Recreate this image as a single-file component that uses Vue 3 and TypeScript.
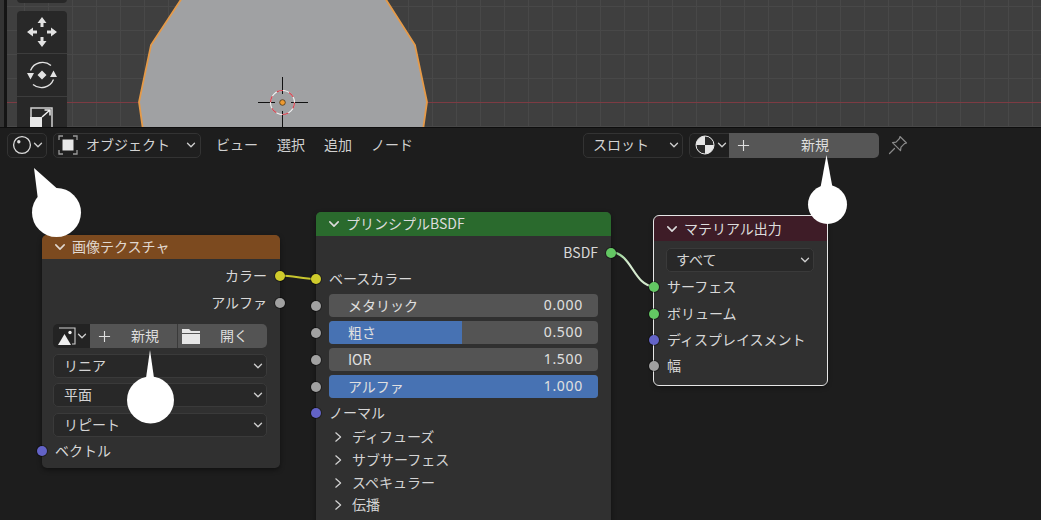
<template>
  <div class="app">
    <svg class="defs" width="0" height="0">
      <symbol id="chev-down" viewBox="0 0 10 10">
        <path d="M1.5 3.2 5 6.8 8.5 3.2" fill="none" stroke="currentColor" stroke-width="1.3" stroke-linecap="round" stroke-linejoin="round" />
      </symbol>
      <symbol id="chev-right" viewBox="0 0 10 10">
        <path d="M2.8 0.8 7.6 5 2.8 9.2" fill="none" stroke="currentColor" stroke-width="1.2" stroke-linecap="round" stroke-linejoin="round" />
      </symbol>
      <symbol id="plus" viewBox="0 0 14 14">
        <path d="M7 1v12M1 7h12" fill="none" stroke="currentColor" stroke-width="1.2" />
      </symbol>
    </svg>

    <section class="viewport">
      <div class="area-edge"></div>
      <svg class="scene" width="1041" height="128" viewBox="0 0 1041 128">
        <line x1="7" y1="102.500" x2="1041" y2="102.500" stroke="#7d3b43" stroke-width="1" />
        <polygon points="182,-2 151,45 139,102 143,130 423,130 427,102 415,45 385,-2" fill="#a0a1a3" stroke="#e59a48" stroke-width="1.800" />
        <g stroke="#111" stroke-width="1" fill="none">
          <line x1="258" y1="102.500" x2="275" y2="102.500" />
          <line x1="291" y1="102.500" x2="308" y2="102.500" />
          <line x1="282.500" y1="77" x2="282.500" y2="94" />
          <line x1="282.500" y1="111" x2="282.500" y2="128" />
        </g>
        <circle cx="282.500" cy="102.500" r="12" fill="none" stroke="#f4f4f4" stroke-width="1.100" />
        <circle cx="282.500" cy="102.500" r="12" fill="none" stroke="#d2434f" stroke-width="1.200" stroke-dasharray="6.300 6.300" />
        <circle cx="282.500" cy="102.500" r="2.800" fill="#ee9a30" stroke="#4a3518" stroke-width="0.800" />
      </svg>
      <div class="tool-stub"></div>
      <div class="tools">
        <div class="tool">
          <svg width="32" height="32" viewBox="0 0 32 32" fill="#e2e2e2">
            <path d="M16 1l4.500 6h-9zM16 31l4.500-6h-9zM1 16l6-4.500v9zM31 16l-6-4.500v9z" />
            <path d="M14.500 7h3v4h-3zM14.500 21h3v4h-3zM7 14.500h4v3H7zM21 14.500h4v3h-4z" />
          </svg>
        </div>
        <div class="tool">
          <svg width="32" height="32" viewBox="0 0 32 32" fill="none">
            <path d="M4.500 11.500a13 13 0 0 1 20.500-5M27.500 20.500a13 13 0 0 1-20.500 5" stroke="#e2e2e2" stroke-width="1.300" />
            <path d="M1 14h7l-3.500 6.500zM24 18h7l-3.500-6.500zM16 11.500l4.500 4.500-4.500 4.500-4.500-4.500z" fill="#e2e2e2" />
          </svg>
        </div>
        <div class="tool tool-last">
          <svg width="32" height="32" viewBox="0 0 32 32" fill="none">
            <path d="M5 10V1h21v21h-9" stroke="#cfcfcf" stroke-width="1.500" />
            <rect x="4" y="10" width="12" height="22" fill="#e8e8e8" />
            <path d="M16 10l8-7M18.500 3h5.500v5.500" stroke="#f0f0f0" stroke-width="1.500" />
          </svg>
        </div>
      </div>
    </section>

    <header class="toolbar">
      <div class="select editor-type">
        <svg width="20" height="20" viewBox="0 0 20 20" fill="none">
          <circle cx="10" cy="10" r="8.400" stroke="#dcdcdc" stroke-width="1.300" />
          <circle cx="6.800" cy="6.800" r="1.700" fill="#dcdcdc" />
        </svg>
        <svg class="chev" width="10" height="10"><use href="#chev-down" /></svg>
      </div>
      <div class="select mode">
        <svg width="20" height="20" viewBox="0 0 20 20" fill="none">
          <path d="M1 5V1h4M15 1h4v4M19 15v4h-4M5 19H1v-4" stroke="#9a9a9a" stroke-width="1.300" />
          <rect x="4.500" y="4.500" width="11" height="11" fill="#e8e8e8" />
        </svg>
        <span class="mode-label">オブジェクト</span>
        <svg class="chev" width="10" height="10"><use href="#chev-down" /></svg>
      </div>
      <nav class="menu">
        <span v-for="item in menuItems" :key="item">{{ item }}</span>
      </nav>
      <div class="select slot">
        <span>スロット</span>
        <svg class="chev" width="10" height="10"><use href="#chev-down" /></svg>
      </div>
      <div class="material">
        <div class="browse">
          <svg width="20" height="20" viewBox="0 0 20 20">
            <circle cx="10" cy="10" r="9" fill="#e6e6e6" />
            <path d="M10 1a9 9 0 0 1 9 9h-9zM10 10H1a9 9 0 0 0 9 9z" fill="#2a2a2a" />
            <circle cx="10" cy="10" r="9" fill="none" stroke="#e6e6e6" stroke-width="1" />
          </svg>
          <svg class="chev" width="10" height="10"><use href="#chev-down" /></svg>
        </div>
        <div class="new-btn">
          <svg width="13" height="13"><use href="#plus" /></svg>
          <span>新規</span>
        </div>
      </div>
      <svg class="pin" width="20" height="20" viewBox="0 0 20 20" fill="none" stroke="#8a8a8a" stroke-width="1.200" stroke-linejoin="round">
        <path d="M12 1.500l6.500 6.500-2 .6-3.500 3.500-.5 3.500-8-8 3.500-.5L11.500 3.500z" />
        <path d="M6.500 13.500 1.500 18.500" stroke-linecap="round" />
      </svg>
    </header>

    <main class="canvas">
      <svg class="noodles" width="1041" height="360" viewBox="0 160 1041 360" fill="none">
        <defs>
          <linearGradient id="noodle" x1="0" y1="0" x2="1" y2="0">
            <stop offset="0" stop-color="#6cc56c" />
            <stop offset="0.4" stop-color="#d8ecd2" />
            <stop offset="1" stop-color="#cfe8c8" />
          </linearGradient>
        </defs>
        <path d="M280 275.500 C 294 275.500, 302 279, 316 279" stroke="#c8c62e" stroke-width="2.200" />
        <path d="M612 252 C 632 254, 634 286, 654 286.500" stroke="url(#noodle)" stroke-width="2.200" />
      </svg>

      <!-- image texture -->
      <article class="node node-image">
        <div class="node-head head-image">
          <svg class="head-chev" width="12" height="12"><use href="#chev-down" /></svg>
          <span>画像テクスチャ</span>
        </div>
        <div class="out-row row-27"><span>カラー</span><i class="socket out yellow"></i></div>
        <div class="out-row row-27"><span>アルファ</span><i class="socket out grey"></i></div>
        <div class="field-stack">
          <div class="image-btns">
            <div class="browse dark">
              <svg width="18" height="18" viewBox="0 0 18 18" fill="none">
                <path d="M1 1h16v16h-3" stroke="#cfcfcf" stroke-width="1.100" />
                <path d="M0 18L6.500 7l6.500 11z" fill="#efefef" />
                <circle cx="12" cy="5.500" r="1.700" fill="#efefef" />
              </svg>
              <svg class="chev" width="10" height="10"><use href="#chev-down" /></svg>
            </div>
            <div class="img-action new">
              <svg width="13" height="13"><use href="#plus" /></svg>
              <span>新規</span>
            </div>
            <div class="img-action open">
              <svg width="18" height="15" viewBox="0 0 18 15">
                <path d="M0 0h7l2 2h9v2H0z M0 5h18v10H0z" fill="#e6e6e6" />
              </svg>
              <span>開く</span>
            </div>
          </div>
          <div v-for="opt in imageOptions" :key="opt" class="field">
            <span>{{ opt }}</span>
            <svg class="chev" width="10" height="10"><use href="#chev-down" /></svg>
          </div>
        </div>
        <div class="in-row vector-row"><i class="socket in blue"></i><span>ベクトル</span></div>
      </article>

      <!-- principled BSDF -->
      <article class="node node-bsdf">
        <div class="node-head head-bsdf">
          <svg class="head-chev" width="12" height="12"><use href="#chev-down" /></svg>
          <span>プリンシプルBSDF</span>
        </div>
        <div class="out-row row-26"><span>BSDF</span><i class="socket out green"></i></div>
        <div class="in-row row-26"><i class="socket in yellow"></i><span>ベースカラー</span></div>
        <div class="sliders">
          <div v-for="s in sliders" :key="s.label" class="slider">
            <i class="socket in grey"></i>
            <div class="slider-fill" :class="{ full: s.fill === 1 }" :style="{ width: `${s.fill * 100}%` }"></div>
            <span class="slider-label">{{ s.label }}</span>
            <span class="slider-value">{{ s.value }}</span>
          </div>
        </div>
        <div class="in-row row-26 normal-row"><i class="socket in blue"></i><span>ノーマル</span></div>
        <div v-for="p in panels" :key="p" class="panel">
          <svg width="10" height="12"><use href="#chev-right" /></svg>
          <span>{{ p }}</span>
        </div>
      </article>

      <!-- material output -->
      <article class="node node-output">
        <div class="node-head head-output">
          <svg class="head-chev" width="12" height="12"><use href="#chev-down" /></svg>
          <span>マテリアル出力</span>
        </div>
        <div class="field target">
          <span>すべて</span>
          <svg class="chev" width="10" height="10"><use href="#chev-down" /></svg>
        </div>
        <div v-for="o in outputs" :key="o.label" class="in-row output-row">
          <i class="socket in" :class="o.color"></i><span>{{ o.label }}</span>
        </div>
      </article>
    </main>

    <svg class="callouts" width="1041" height="520" viewBox="0 0 1041 520" fill="#fff">
      <path d="M34 168 L61 192 L38 200z" />
      <circle cx="56.500" cy="212.500" r="24.500" />
      <path d="M826.500 155 L820 190 L833 190z" />
      <circle cx="827.500" cy="204.500" r="19.500" />
      <path d="M150 350 L145 385 L155 385z" />
      <circle cx="150.500" cy="400" r="23.500" />
    </svg>
  </div>
</template>

<script setup lang="ts">
interface Slider {
  label: string
  fill: number
  value: string
}

const menuItems = ['ビュー', '選択', '追加', 'ノード']
const imageOptions = ['リニア', '平面', 'リピート']
const panels = ['ディフューズ', 'サブサーフェス', 'スペキュラー', '伝播']

const sliders: Slider[] = [
  { label: 'メタリック', fill: 0, value: '0.000' },
  { label: '粗さ', fill: 0.495, value: '0.500' },
  { label: 'IOR', fill: 0, value: '1.500' },
  { label: 'アルファ', fill: 1, value: '1.000' },
]

const outputs = [
  { label: 'サーフェス', color: 'green' },
  { label: 'ボリューム', color: 'green' },
  { label: 'ディスプレイスメント', color: 'blue' },
  { label: '幅', color: 'grey' },
]
</script>

<style>
html,
body {
  margin: 0;
  background: #1d1d1d;
}
</style>

<style scoped>
.app {
  position: relative;
  width: 1041px;
  height: 520px;
  overflow: hidden;
  display: flex;
  flex-direction: column;
  background: #1d1d1d;
  color: #d4d4d4;
  font-family: "Noto Sans CJK JP", "Noto Sans", sans-serif;
  font-size: 14px;
  line-height: 1;
}
/* the CJK face sits low in its line box, lifts labels by 1px in the flex rows */
span {
  padding-bottom: 2px;
}
.defs {
  position: absolute;
}

/* 3d viewport */
.viewport {
  position: relative;
  flex: 0 0 128px;
  overflow: hidden;
  background-color: #3f3f3f;
  background-image:
    repeating-linear-gradient(90deg, #484848 0 1px, transparent 1px 24px),
    repeating-linear-gradient(0deg, #484848 0 1px, transparent 1px 24px);
  border-bottom: 1px solid #0e0e0e;
  box-sizing: border-box;
}
.area-edge {
  position: absolute;
  left: 0;
  top: 0;
  bottom: 0;
  width: 4px;
  border-right: 3px solid #141414;
  background: #333;
}
.scene {
  position: absolute;
  inset: 0;
}
.tool-stub {
  position: absolute;
  left: 17px;
  top: -10px;
  width: 50px;
  height: 13px;
  border-radius: 4px;
  background: #282828;
}
.tools {
  position: absolute;
  left: 17px;
  top: 11px;
  width: 50px;
  height: 130px;
  border-radius: 4px;
  background: #282828;
  display: flex;
  flex-direction: column;
}
.tool {
  flex: 0 0 42px;
  display: flex;
  align-items: center;
  justify-content: center;
  border-bottom: 1px solid #3d3d3d;
}
.tool-last {
  flex: 0 0 auto;
  padding-top: 10px;
  border-bottom: 0;
}

/* header */
.toolbar {
  flex: 0 0 32px;
  display: flex;
  align-items: center;
  padding: 2px 0 0 7px;
  box-sizing: border-box;
  background: #1d1d1d;
}
.select {
  height: 25px;
  box-sizing: border-box;
  display: flex;
  align-items: center;
  border: 1px solid #333;
  border-radius: 5px;
  background: #1f1f1f;
}
.chev {
  color: #cfcfcf;
  flex: none;
}
.editor-type {
  width: 40px;
  padding-left: 4px;
  gap: 1px;
}
.mode {
  width: 148px;
  margin-left: 6px;
  padding: 0 4px 0 4px;
}
.mode-label {
  margin-left: 8px;
  flex: 1;
}
.menu {
  width: 367px;
  margin-left: 15px;
  display: flex;
  gap: 19px;
  color: #d0d0d0;
}
.menu span {
  white-space: nowrap;
}
.slot {
  width: 100px;
  justify-content: space-between;
  padding: 0 3px 0 9px;
}
.material {
  width: 190px;
  height: 25px;
  margin-left: 6px;
  display: flex;
  border-radius: 5px;
  overflow: hidden;
}
.browse {
  flex: 0 0 40px;
  box-sizing: border-box;
  display: flex;
  align-items: center;
  padding-left: 5px;
  gap: 2px;
  background: #1f1f1f;
  border: 1px solid #333;
  border-right: 0;
  border-radius: 5px 0 0 5px;
}
.new-btn {
  flex: 1;
  display: flex;
  align-items: center;
  padding-left: 8px;
  background: #565656;
  color: #dedede;
}
.new-btn span {
  margin-left: 51px;
}
.pin {
  margin-left: 9px;
}

/* node canvas */
.canvas {
  position: relative;
  flex: 1;
  background: #1d1d1d;
}
.noodles {
  position: absolute;
  left: 0;
  top: 0;
}
.node {
  position: absolute;
  background: #303030;
  border-radius: 5px;
  box-shadow: 0 2px 5px rgba(0, 0, 0, 0.45);
  box-sizing: border-box;
}
.node-image {
  left: 42px;
  top: 75px;
  width: 238px;
  height: 233px;
}
.node-bsdf {
  left: 316px;
  top: 52px;
  width: 295px;
  height: 340px;
  padding-bottom: 20px;
}
.node-output {
  left: 654px;
  top: 56px;
  width: 173px;
  height: 169px;
  outline: 1.5px solid #e6e6e6;
}
.node-head {
  display: flex;
  align-items: center;
  height: 24px;
  padding-left: 12px;
  border-radius: 5px 5px 0 0;
  color: #dcdcdc;
}
.head-chev {
  margin-right: 6px;
  flex: none;
}
.head-image {
  background: #7c4a1f;
  color: #e0d8d0;
}
.head-bsdf {
  background: #2a6a2d;
}
.head-output {
  height: 25px;
  background: #3e1c27;
}
.out-row,
.in-row {
  position: relative;
  display: flex;
  align-items: center;
  color: #d8d8d8;
}
.out-row {
  justify-content: flex-end;
  padding-right: 13px;
}
.in-row {
  padding-left: 13px;
}
.row-27 {
  height: 27px;
}
.node-head + .row-27 {
  margin-top: 3px;
}
.row-26 {
  height: 26px;
}
.node-head + .row-26 {
  margin-top: 4px;
}
.socket {
  position: absolute;
  top: 50%;
  width: 10px;
  height: 10px;
  margin-top: -5px;
  border-radius: 50%;
  box-shadow: 0 0 0 1px rgba(0, 0, 0, 0.35);
}
.socket.out {
  right: -5px;
}
.socket.in {
  left: -5px;
}
.yellow {
  background: #cfcb2c;
}
.grey {
  background: #a1a1a1;
}
.blue {
  background: #6363c7;
}
.green {
  background: #63c763;
}

.field-stack {
  margin: 8px 13px 0 11px;
  display: flex;
  flex-direction: column;
  gap: 5.5px;
}
.image-btns {
  display: flex;
  height: 24px;
  border-radius: 5px;
  overflow: hidden;
}
.browse.dark {
  flex: 0 0 37px;
  padding-left: 5px;
  background: #232323;
  border: 0;
  border-radius: 0;
  gap: 1px;
}
.img-action {
  display: flex;
  align-items: center;
  background: #545454;
  color: #dedede;
}
.img-action.new {
  flex: 0 0 88px;
  padding-left: 8px;
  box-sizing: border-box;
  border-right: 1px solid #3a3a3a;
}
.img-action.new span {
  margin-left: 20px;
}
.img-action.open {
  flex: 1;
  padding-left: 4px;
}
.img-action.open span {
  margin-left: 20px;
}
.field {
  height: 24px;
  box-sizing: border-box;
  display: flex;
  align-items: center;
  justify-content: space-between;
  padding: 0 3px 0 10px;
  border: 1px solid #3a3a3a;
  border-radius: 5px;
  background: #282828;
}
.vector-row {
  height: 24px;
  margin-top: 2px;
}
.sliders {
  margin: 2px 13px 0 13px;
  display: flex;
  flex-direction: column;
  gap: 4px;
}
.slider {
  position: relative;
  height: 23px;
  display: flex;
  align-items: center;
  justify-content: space-between;
  padding: 0 15px 0 19px;
  border-radius: 4px;
  background: #545454;
}
.slider .socket.in {
  left: -18px;
}
.slider-fill {
  position: absolute;
  left: 0;
  top: 0;
  bottom: 0;
  border-radius: 4px 0 0 4px;
  background: #4772b3;
}
.slider-fill.full {
  border-radius: 4px;
}
.slider-label,
.slider-value {
  position: relative;
  color: #e0e0e0;
}
.slider-value {
  font-family: "Noto Sans", sans-serif;
  letter-spacing: 0.7px;
}
.normal-row {
  margin-top: 2px;
}
.panel {
  height: 22.7px;
  display: flex;
  align-items: center;
  gap: 9px;
  padding-left: 17px;
  color: #d4d4d4;
}
.field.target {
  margin: 7px 13px 2px 12px;
  padding-left: 9px;
}
.output-row {
  height: 26.4px;
}
.callouts {
  position: absolute;
  left: 0;
  top: 0;
  pointer-events: none;
}
</style>
